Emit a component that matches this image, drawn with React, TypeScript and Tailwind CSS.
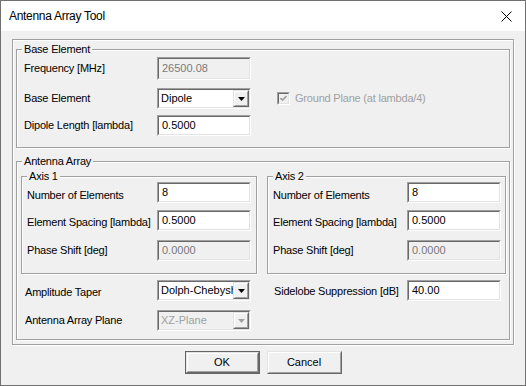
import React from 'react';

const FONT = "font-['Liberation_Sans',Arial,sans-serif]";

function Sunken({ className, inner, children }: { className: string; inner: string; children?: React.ReactNode }) {
  return (
    <div className={`border border-t-[#a0a0a0] border-l-[#a0a0a0] border-b-white border-r-white ${className}`}>
      <div className={`h-full w-full border border-t-[#696969] border-l-[#696969] border-b-[#e3e3e3] border-r-[#e3e3e3] ${inner}`}>
        {children}
      </div>
    </div>
  );
}

function Raised({ className, children }: { className: string; children?: React.ReactNode }) {
  return (
    <div className={`border border-t-[#e3e3e3] border-l-[#e3e3e3] border-b-[#696969] border-r-[#696969] ${className}`}>
      <div className="h-full w-full border border-t-white border-l-white border-b-[#a0a0a0] border-r-[#a0a0a0] bg-[#f0f0f0] flex items-center justify-center">
        {children}
      </div>
    </div>
  );
}

function TextBox({ value, disabled, tall }: { value: string; disabled?: boolean; tall?: boolean }) {
  return (
    <Sunken
      className={`w-[94px] shrink-0 ${tall ? 'h-[23px]' : 'h-[21px]'}`}
      inner={`flex items-center pl-[3px] text-[11px] ${disabled ? 'bg-[#f0f0f0] text-[#7a7a7a]' : 'bg-white text-black'}`}
    >
      {value}
    </Sunken>
  );
}

function Combo({ value, disabled }: { value: string; disabled?: boolean }) {
  return (
    <Sunken
      className="w-[94px] h-[21px] shrink-0"
      inner={`flex items-stretch text-[11px] ${disabled ? 'bg-[#f0f0f0] text-[#a0a0a0]' : 'bg-white text-black'}`}
    >
      <div className="flex-1 overflow-hidden whitespace-nowrap pl-[2px] flex items-center">{value}</div>
      <Raised className="w-[16px] h-full shrink-0">
        <svg width="7" height="4" viewBox="0 0 7 4">
          <polygon points="0,0 7,0 3.5,4" fill={disabled ? '#a0a0a0' : '#000'} />
        </svg>
      </Raised>
    </Sunken>
  );
}

function Group({ title, className, children }: { title: string; className: string; children?: React.ReactNode }) {
  return (
    <fieldset className={`border border-[#a0a0a0] shadow-[inset_1px_1px_0_#fff,1px_1px_0_#fff] ${className}`}>
      <legend className="ml-[5px] px-[2px] bg-[#f0f0f0] text-[11px] leading-[12px] tracking-[-0.2px]">{title}</legend>
      {children}
    </fieldset>
  );
}

function Label({ text, w, dy = '' }: { text: string; w: string; dy?: string }) {
  return <span className={`${w} ${dy} shrink-0 whitespace-nowrap text-[11px] tracking-[-0.2px]`}>{text}</span>;
}

export default function App() {
  return (
    <div className={`w-[526px] h-[386px] border border-[#707070] bg-[#f0f0f0] flex flex-col text-black ${FONT}`}>
      {/* Title bar */}
      <div className="h-[30px] shrink-0 bg-white flex items-center justify-between pl-[8px] pr-[13px]">
        <span className="text-[12px] tracking-[-0.3px]">Antenna Array Tool</span>
        <svg width="11" height="11" viewBox="0 0 11 11">
          <path d="M0.5 0.5 L10.5 10.5 M10.5 0.5 L0.5 10.5" stroke="#000" strokeWidth="1" />
        </svg>
      </div>

      <div className="px-[11px] pt-[8px]">
        <div className="border border-[#a0a0a0] shadow-[inset_1px_1px_0_#fff,1px_1px_0_#fff] px-[3px] pt-[3px] pb-[4px]">
          {/* Base Element */}
          <Group title="Base Element" className="w-[494px]">
            <div className="pl-[7px] pt-[2px] pb-[11px] flex flex-col">
              <div className="flex items-center h-[23px]">
                <Label text="Frequency [MHz]" w="w-[133px]" />
                <TextBox value="26500.08" disabled tall />
              </div>
              <div className="flex items-center h-[21px] mt-[8px]">
                <Label text="Base Element" w="w-[133px]" />
                <Combo value="Dipole" />
                <div className="ml-[26px] flex items-center gap-[5px]">
                  <Sunken className="w-[13px] h-[13px]" inner="bg-[#f0f0f0] flex items-center justify-center">
                    <svg width="7" height="7" viewBox="0 0 7 7">
                      <path d="M0.5 3 L2.5 5 L6.5 1" stroke="#a0a0a0" strokeWidth="1.6" fill="none" />
                    </svg>
                  </Sunken>
                  <span className="text-[11px] tracking-[-0.2px] text-[#a0a0a0] whitespace-nowrap">Ground Plane (at lambda/4)</span>
                </div>
              </div>
              <div className="flex items-center h-[21px] mt-[6px]">
                <Label text="Dipole Length [lambda]" w="w-[133px]" />
                <TextBox value="0.5000" />
              </div>
            </div>
          </Group>

          {/* Antenna Array */}
          <Group title="Antenna Array" className="w-[494px] mt-[7px]">
            <div className="pl-[4px] pr-[3px] pb-[8px]">
              <div className="flex gap-[10px] mt-[3px]">
                {[
                  { title: 'Axis 1', w: 'w-[236px]', lw: 'w-[130px]' },
                  { title: 'Axis 2', w: 'w-[239px]', lw: 'w-[134px]' },
                ].map((ax) => (
                  <Group key={ax.title} title={ax.title} className={ax.w}>
                    <div className="pl-[5px] pb-[12px] flex flex-col">
                      <div className="flex items-center h-[21px]">
                        <Label text="Number of Elements" w={ax.lw} dy="translate-y-[3px]" />
                        <TextBox value="8" />
                      </div>
                      <div className="flex items-center h-[21px] mt-[7px]">
                        <Label text="Element Spacing [lambda]" w={ax.lw} dy="translate-y-[2px]" />
                        <TextBox value="0.5000" />
                      </div>
                      <div className="flex items-center h-[21px] mt-[9px]">
                        <Label text="Phase Shift [deg]" w={ax.lw} />
                        <TextBox value="0.0000" disabled />
                      </div>
                    </div>
                  </Group>
                ))}
              </div>

              <div className="flex gap-[10px] mt-[6px]">
                <div className="w-[236px] flex flex-col pl-[4px]">
                  <div className="flex items-center h-[21px]">
                    <Label text="Amplitude Taper" w="w-[132px]" dy="translate-y-[2px]" />
                    <Combo value="Dolph-Chebyshev" />
                  </div>
                  <div className="flex items-center h-[21px] mt-[9px]">
                    <Label text="Antenna Array Plane" w="w-[132px]" />
                    <Combo value="XZ-Plane" disabled />
                  </div>
                </div>
                <div className="w-[239px] flex flex-col pl-[7px]">
                  <div className="flex items-center h-[21px]">
                    <Label text="Sidelobe Suppression [dB]" w="w-[133px]" dy="translate-y-[1px]" />
                    <TextBox value="40.00" />
                  </div>
                </div>
              </div>
            </div>
          </Group>
        </div>

        {/* Buttons */}
        <div className="flex justify-center gap-[7px] mt-[6px]">
          <div className="w-[75px] h-[23px] border border-[#646464]">
            <Raised className="w-full h-full">
              <span className="text-[11px]">OK</span>
            </Raised>
          </div>
          <Raised className="w-[75px] h-[23px]">
            <span className="text-[11px]">Cancel</span>
          </Raised>
        </div>
      </div>
    </div>
  );
}
